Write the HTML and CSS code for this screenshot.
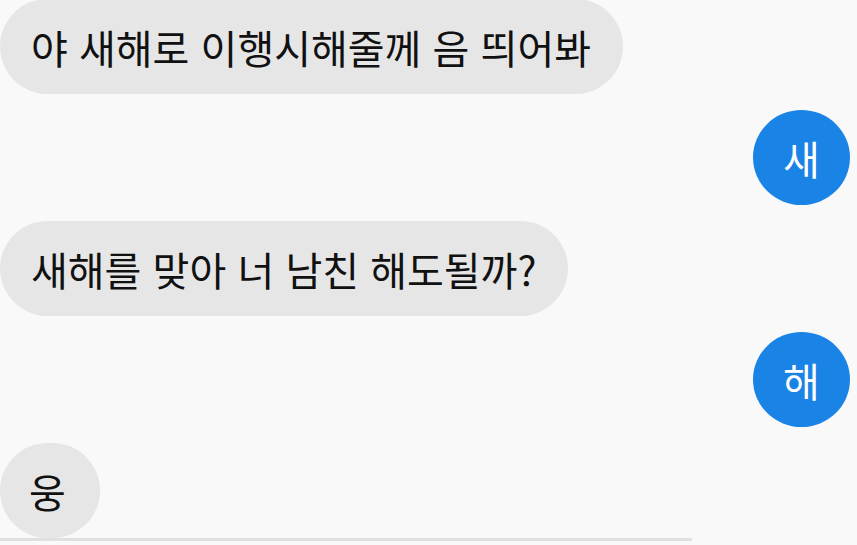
FILE: index.html
```html
<!DOCTYPE html>
<html lang="ko">
<head>
<meta charset="utf-8">
<link rel="stylesheet" href="styles.css">
</head>
<body>
<div class="chat">
  <div class="row in"><div class="bubble">야 새해로 이행시해줄께 음 띄어봐</div></div>
  <div class="row out"><div class="dot">새</div></div>
  <div class="row in"><div class="bubble">새해를 맞아 너 남친 해도될까?</div></div>
  <div class="row out"><div class="dot">해</div></div>
  <div class="row in"><div class="bubble short">웅</div></div>
</div>
<div class="composer"></div>
</body>
</html>
```
FILE: styles.css
```css
html, body {
  margin: 0;
  padding: 0;
  background: #f9f9f9;
  width: 857px;
  height: 545px;
  overflow: hidden;
}
body {
  font-family: "Noto Sans CJK KR", "Noto Sans", sans-serif;
  color: #111;
}
.chat {
  display: flex;
  flex-direction: column;
  gap: 16px;
  padding: 0 7px 0 0;
  margin-top: -1px;
}
.row {
  display: flex;
}
.row.out {
  justify-content: flex-end;
}
.bubble {
  height: 95px;
  box-sizing: border-box;
  display: flex;
  align-items: center;
  padding: 0 32px 0 31px;
  background: #e6e6e6;
  border-radius: 48px;
  font-size: 40px;
  font-weight: 400;
  line-height: 1;
  white-space: nowrap;
}
.bubble.short {
  width: 100px;
  padding: 0 0 0 29px;
}
.dot {
  width: 97px;
  height: 95px;
  border-radius: 50%;
  background: #1a83e6;
  color: #fff;
  font-size: 40px;
  line-height: 1;
  display: flex;
  align-items: center;
  justify-content: center;
}
.composer {
  width: 692px;
  height: 3px;
  background: #e0e0e0;
  margin-top: 0;
}
```
